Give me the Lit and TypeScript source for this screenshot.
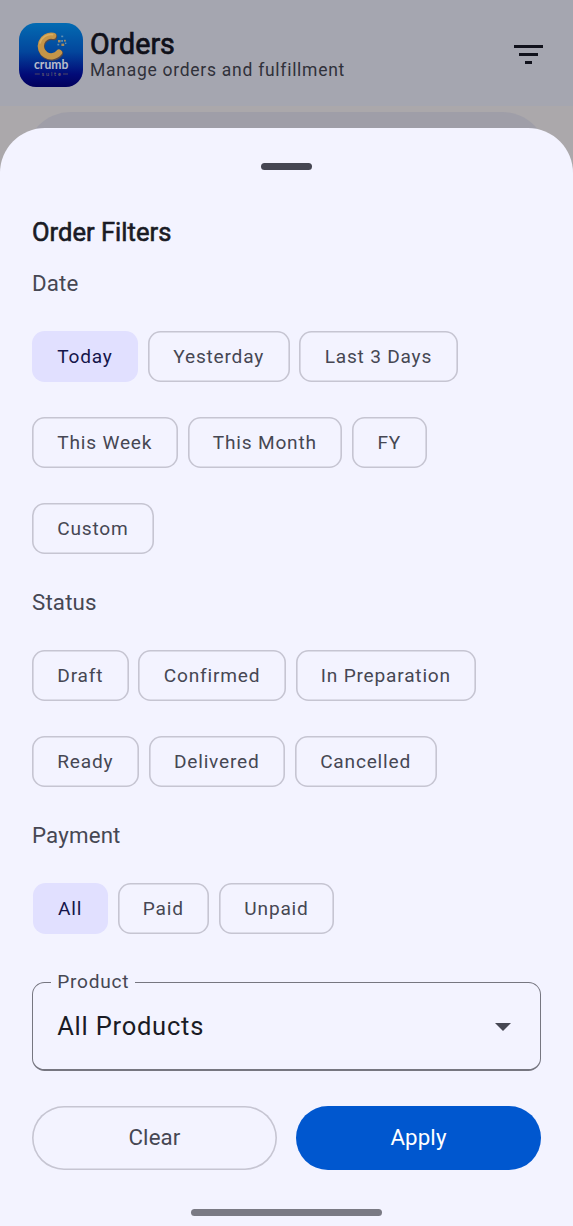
import { LitElement, html, css } from "lit";
import { customElement, property, state } from "lit/decorators.js";

@customElement("brand-logo")
class BrandLogo extends LitElement {
  static styles = css`
    :host { display: block; width: 64px; height: 64px; }
    svg { display: block; }
    .name { font: 700 13px Lato, "Noto Sans", sans-serif; fill: #b9bccb; }
    .suite { font: 400 5.5px Lato, sans-serif; fill: #7d7068; }
  `;
  render() {
    return html`
      <svg width="64" height="64" viewBox="0 0 64 64">
        <defs>
          <linearGradient id="bg" x1="0" y1="0" x2="0" y2="1">
            <stop offset="0" stop-color="#036bb2" />
            <stop offset="0.45" stop-color="#03469c" />
            <stop offset="0.8" stop-color="#020b78" />
            <stop offset="1" stop-color="#02005c" />
          </linearGradient>
        </defs>
        <rect width="64" height="64" rx="17" fill="url(#bg)" />
        <g fill="none" stroke-linecap="round">
          <path d="M34.2 13.2A10.3 10.3 0 1 0 40 29.8" stroke="#5a4a48" stroke-width="6.8" transform="translate(.6 .7)" />
          <path d="M34.2 12.9A10.3 10.3 0 1 0 40 29.6" stroke="#c59548" stroke-width="6.2" />
          <path d="M33.6 11.6A11.4 11.4 0 0 0 21 20" stroke="#d9ae62" stroke-width="1.6" />
        </g>
        <g fill="#a88a5c">
          <rect x="39" y="17" width="2.6" height="2.4" />
          <rect x="42.4" y="20.6" width="2.8" height="2.4" />
          <rect x="45" y="16.8" width="1.8" height="1.8" />
        </g>
        <g fill="#5f8fb4">
          <rect x="42.2" y="12.6" width="2" height="1.6" />
          <rect x="42.2" y="17" width="1.8" height="1.8" />
          <rect x="38.4" y="20.8" width="1.8" height="1.6" />
          <rect x="46" y="19.6" width="1.4" height="1.4" />
        </g>
        <text class="name" x="15" y="46.2" textLength="34.4" lengthAdjust="spacingAndGlyphs">crumb</text>
        <text class="suite" x="22.8" y="53" textLength="19" lengthAdjust="spacing">suite</text>
        <path d="M15.8 51h5M44 51h5" stroke="#4f4763" stroke-width="1" />
      </svg>
    `;
  }
}

@customElement("filter-chip")
class FilterChip extends LitElement {
  @property() label = "";
  @property({ type: Boolean, reflect: true }) selected = false;
  static styles = css`
    :host {
      display: flex; align-items: center; box-sizing: border-box; height: 51px;
      padding: 0 25.6px 0 25.3px; border-radius: 12.5px; box-shadow: inset 0 0 0 1.6px #c6c5d2;
      font-size: 19.1px; letter-spacing: 0.8px; color: #464753; white-space: nowrap;
    }
    :host([selected]) { background: #e1e0ff; box-shadow: none; color: #15154a; }
  `;
  render() {
    return html`${this.label}`;
  }
}

@customElement("filter-section")
class FilterSection extends LitElement {
  @property() heading = "";
  @property({ attribute: false }) rows: string[][] = [];
  @state() private active = "";
  @property() initial = "";
  static styles = css`
    :host { display: block; }
    .heading { height: 32px; line-height: 32px; margin-bottom: 32px; font-size: 22.3px; letter-spacing: 0.16px; color: #464753; }
    .rows { display: flex; flex-direction: column; gap: 35px; }
    .row { display: flex; gap: 9.7px; }
    :host(.inset) .row { padding-left: 0.8px; }
  `;
  willUpdate() {
    if (!this.active) this.active = this.initial;
  }
  render() {
    return html`
      <div class="heading">${this.heading}</div>
      <div class="rows">
        ${this.rows.map(
          (row) => html`<div class="row">
            ${row.map(
              (label) => html`<filter-chip
                .label=${label}
                ?selected=${label === this.active}
                @click=${() => (this.active = label)}
              ></filter-chip>`
            )}
          </div>`
        )}
      </div>
    `;
  }
}

@customElement("app-root")
class AppRoot extends LitElement {
  static styles = css`
    :host {
      display: block; position: relative; width: 573px; height: 1226px; overflow: hidden;
      background: #aba8ab; font-family: Roboto, "Liberation Sans", sans-serif;
    }
    .header {
      display: flex; align-items: flex-start; box-sizing: border-box; height: 106px;
      padding: 23px 30px 0 19px; background: #a5a6b0;
    }
    .titles { flex: 1; padding: 3px 0 0 7px; }
    .title { font-size: 28.6px; line-height: 36px; color: #0f1019; -webkit-text-stroke: 0.7px #0f1019; }
    .subtitle { font-size: 17.5px; line-height: 16px; letter-spacing: 0.73px; color: #30313a; }
    .filter { display: block; margin-top: 21px; }
    .search { height: 89px; margin: 6px 26px 0; border-radius: 45px; background: #9f9ea8; }
    .sheet {
      position: absolute; inset: 128px 0 0; display: flex; flex-direction: column; box-sizing: border-box;
      padding: 35px 32px 0; border-radius: 45px 45px 0 0; background: #f3f3ff;
    }
    .handle { flex: none; align-self: center; width: 51px; height: 7px; border-radius: 4px; background: #454652; }
    .sheet-title {
      margin: 46px 0 19px; height: 32px; line-height: 32px; font-size: 25.5px; letter-spacing: 0.03px; color: #1a1b25;
      -webkit-text-stroke: 0.6px #1a1b25;
    }
    .sections { display: flex; flex-direction: column; gap: 32px; }
    .field {
      display: block; box-sizing: border-box; height: 100px; min-inline-size: 0; margin: 37px 0 0; padding: 0 29px 0 24.2px;
      border: 1px solid #767680; border-bottom-width: 2px; border-radius: 12.5px;
    }
    .legend { margin-left: -6px; padding: 0 6px; font-size: 19.1px; line-height: 22px; letter-spacing: 0.76px; color: #464753; }
    .value { display: flex; align-items: center; justify-content: space-between; height: 65px; font-size: 25.5px; letter-spacing: 0.77px; color: #1a1b25; }
    .arrow { margin-top: 2px; }
    .actions { display: flex; gap: 19px; margin-top: 35px; }
    .button {
      flex: 1; box-sizing: border-box; height: 64px; line-height: 63px; text-align: center; box-shadow: inset 0 0 0 1.6px #c6c5d2;
      border-radius: 32px; font-size: 22.3px; letter-spacing: 0.12px; color: #464753;
    }
    .primary { background: #0057cf; box-shadow: none; color: #fff; }
    .nav { flex: none; align-self: center; width: 191px; height: 7px; margin-top: 39px; border-radius: 4px; background: #7a7a84; }
  `;
  render() {
    return html`
      <div class="header">
        <brand-logo></brand-logo>
        <div class="titles">
          <div class="title">Orders</div>
          <div class="subtitle">Manage orders and fulfillment</div>
        </div>
        <svg class="filter" width="29" height="20" viewBox="0 0 29 20" fill="#11121c">
          <path d="M0 1h29v3H0zM5 9h19v3H5zM11 17h7v3h-7z" />
        </svg>
      </div>
      <div class="search"></div>
      <div class="sheet">
        <div class="handle"></div>
        <div class="sheet-title">Order Filters</div>
        <div class="sections">
          <filter-section
            heading="Date"
            initial="Today"
            .rows=${[["Today", "Yesterday", "Last 3 Days"], ["This Week", "This Month", "FY"], ["Custom"]]}
          ></filter-section>
          <filter-section
            heading="Status"
            .rows=${[["Draft", "Confirmed", "In Preparation"], ["Ready", "Delivered", "Cancelled"]]}
          ></filter-section>
          <filter-section class="inset" heading="Payment" initial="All" .rows=${[["All", "Paid", "Unpaid"]]}></filter-section>
        </div>
        <fieldset class="field">
          <legend class="legend">Product</legend>
          <div class="value">
            All Products
            <svg class="arrow" width="16" height="8" viewBox="0 0 16 8"><path d="M0 0h16L8 8z" fill="#464753" /></svg>
          </div>
        </fieldset>
        <div class="actions">
          <div class="button">Clear</div>
          <div class="button primary">Apply</div>
        </div>
        <div class="nav"></div>
      </div>
    `;
  }
}
